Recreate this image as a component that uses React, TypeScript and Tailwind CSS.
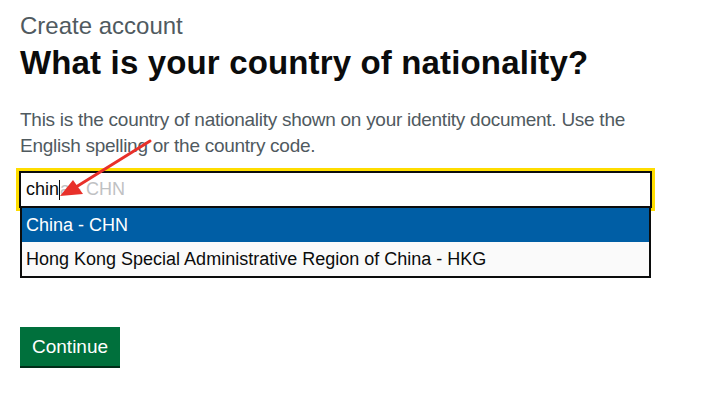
import { useState } from 'react';

const OPTIONS = [
  'China - CHN',
  'Hong Kong Special Administrative Region of China - HKG',
];

export default function App() {
  const [active] = useState(0);

  return (
    <div className="relative w-[718px] h-[405px] bg-white font-['Liberation_Sans',Arial,sans-serif] text-[#0b0c0c]">
      <div className="px-5 pt-3">
        <span className="block text-[24px] leading-[28px] text-[#505a5f]">Create account</span>
        <h1 className="mt-[3px] text-[33px] leading-[40px] font-bold tracking-[0.15px]">What is your country of nationality?</h1>
        <p className="mt-6 w-[640px] text-[19px] leading-[26px] tracking-[-0.27px] text-[#505a5f]">
          This is the country of nationality shown on your identity document. Use the<br />
          English spelling or the country code.
        </p>

        <div className="mt-3 -ml-px w-[633px]">
          {/* input with focus ring */}
          <div className="flex items-center h-[37px] border-2 border-[#0b0c0c] outline-[3px] outline-solid outline-[#ffdd00] bg-white pl-[5px] text-[18px] leading-[33px]">
            <span>chin</span>
            <span className="w-px h-[20px] bg-[#0b0c0c]" />
            <span className="text-[#bfc1c3]">a - CHN</span>
          </div>
          {/* listbox */}
          <ul className="relative z-10 mx-px border-2 border-t-0 border-[#0b0c0c] bg-white">
            {OPTIONS.map((opt, i) => (
              <li
                key={opt}
                className={
                  i === active
                    ? 'h-[34px] pl-1 text-[18px] leading-[34px] bg-[#005ea5] text-white'
                    : 'h-[34px] pl-1 text-[18px] leading-[34px] bg-[#fafafa] text-[#0b0c0c]'
                }
              >
                {opt}
              </li>
            ))}
          </ul>
        </div>

        <button className="mt-[49px] h-[39px] px-3 bg-[#00703c] text-white text-[19px] leading-[37px] shadow-[0_2px_0_#002d18]">
          Continue
        </button>
      </div>

      {/* annotation arrow */}
      <svg className="absolute top-0 left-0 pointer-events-none" width="718" height="405" viewBox="0 0 718 405">
        <line x1="150" y1="141" x2="76" y2="187" stroke="#e8302a" strokeWidth="3" strokeLinecap="round" />
        <polygon points="60,196 73,180 83,194" fill="#e8302a" />
      </svg>
    </div>
  );
}
